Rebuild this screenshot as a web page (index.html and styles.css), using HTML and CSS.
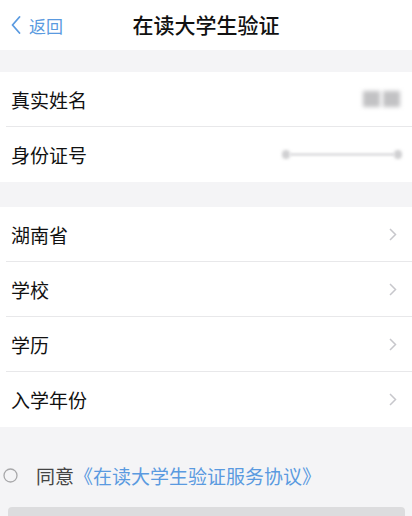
FILE: index.html
```html
<!DOCTYPE html>
<html lang="zh-CN">
<head>
<meta charset="UTF-8">
<meta name="viewport" content="width=device-width, initial-scale=1.0">
<title>在读大学生验证</title>
<link rel="stylesheet" href="styles.css">
</head>
<body>

<div class="nav">
    <a class="back" href="#">
        <svg width="10" height="18" viewBox="0 0 10 18"><polyline points="8.5,1 1.5,9 8.5,17" fill="none" stroke="currentColor" stroke-width="1.8" stroke-linecap="round" stroke-linejoin="round"/></svg>
        <span>返回</span>
    </a>
    <div class="title">在读大学生验证</div>
    <div></div>
</div>

<div class="group first">
    <div class="cell">
        <span class="label">真实姓名</span>
        <span class="masked-name"><i></i><i></i></span>
    </div>
    <div class="cell">
        <span class="label">身份证号</span>
        <span class="masked-id"><i></i><b></b><i></i></span>
    </div>
</div>

<div class="group second">
    <div class="cell">
        <span class="label">湖南省</span>
        <svg class="arrow" width="8" height="13" viewBox="0 0 8 13"><polyline points="1,1 6.5,6.5 1,12" fill="none" stroke="#c7c7cc" stroke-width="1.5"/></svg>
    </div>
    <div class="cell">
        <span class="label">学校</span>
        <svg class="arrow" width="8" height="13" viewBox="0 0 8 13"><polyline points="1,1 6.5,6.5 1,12" fill="none" stroke="#c7c7cc" stroke-width="1.5"/></svg>
    </div>
    <div class="cell">
        <span class="label">学历</span>
        <svg class="arrow" width="8" height="13" viewBox="0 0 8 13"><polyline points="1,1 6.5,6.5 1,12" fill="none" stroke="#c7c7cc" stroke-width="1.5"/></svg>
    </div>
    <div class="cell">
        <span class="label">入学年份</span>
        <svg class="arrow" width="8" height="13" viewBox="0 0 8 13"><polyline points="1,1 6.5,6.5 1,12" fill="none" stroke="#c7c7cc" stroke-width="1.5"/></svg>
    </div>
</div>

<div class="agree">
    <svg class="radio" width="15" height="15" viewBox="0 0 15 15"><circle cx="7.5" cy="7.5" r="6.5" fill="none" stroke="#a8a8aa" stroke-width="1.3"/></svg>
    <span class="agree-text">同意<a href="#">《在读大学生验证服务协议》</a></span>
</div>

<div class="submit"></div>

</body>
</html>
```

FILE: styles.css
```css
/* page */
body {
    margin: 0;
    background-color: #f4f4f6;
    font-family: "Noto Sans CJK SC", "Noto Sans", sans-serif;
    color: #111;
    overflow: hidden;
}
.nav {
    display: grid;
    grid-template-columns: 1fr auto 1fr;
    align-items: center;
    height: 50px;
    background-color: #fff;
}
.back {
    display: flex;
    align-items: center;
    padding-left: 11px;
    color: #5a9ae0;
    text-decoration: none;
    font-size: 17px;
}
.back span {
    margin-left: 8px;
}
.title {
    font-size: 21px;
    font-weight: 500;
    color: #111;
    margin-top: -2px;
}

/* list groups */
.group {
    background-color: #fff;
}
.group.first {
    margin-top: 22px;
}
.group.second {
    margin-top: 25px;
}
.cell {
    display: flex;
    align-items: center;
    justify-content: space-between;
    height: 55px;
    box-sizing: border-box;
    margin-left: 6px;
    padding-left: 5px;
    padding-right: 15px;
    border-bottom: 1px solid #e8e8ea;
}
.cell:last-child {
    border-bottom: none;
}
.label {
    font-size: 19px;
}

/* blurred values */
.masked-name {
    display: flex;
    gap: 3px;
    margin-right: -3px;
}
.masked-name i {
    width: 17px;
    height: 16px;
    background-color: #c2c2c4;
    filter: blur(2px);
}
.masked-id {
    display: flex;
    align-items: center;
    width: 120px;
    margin-right: -5px;
}
.masked-id i {
    width: 8px;
    height: 9px;
    background-color: #d0d0d2;
    border-radius: 4px;
    filter: blur(1.5px);
}
.masked-id b {
    flex: 1;
    height: 3px;
    background-color: #e0e0e2;
    filter: blur(1px);
}
.arrow {
    display: block;
}

/* agreement */
.agree {
    display: flex;
    align-items: center;
    height: 26px;
    margin-top: 35px;
    padding-left: 3px;
}
.radio {
    display: block;
    flex-shrink: 0;
}
.agree-text {
    margin-left: 18px;
    font-size: 19px;
    color: #444;
}
.agree-text a {
    color: #5a9ae0;
    text-decoration: none;
}
.submit {
    height: 44px;
    margin: 19px 7px 0 8px;
    border-radius: 4px;
    background-color: #dcdcde;
}
```
